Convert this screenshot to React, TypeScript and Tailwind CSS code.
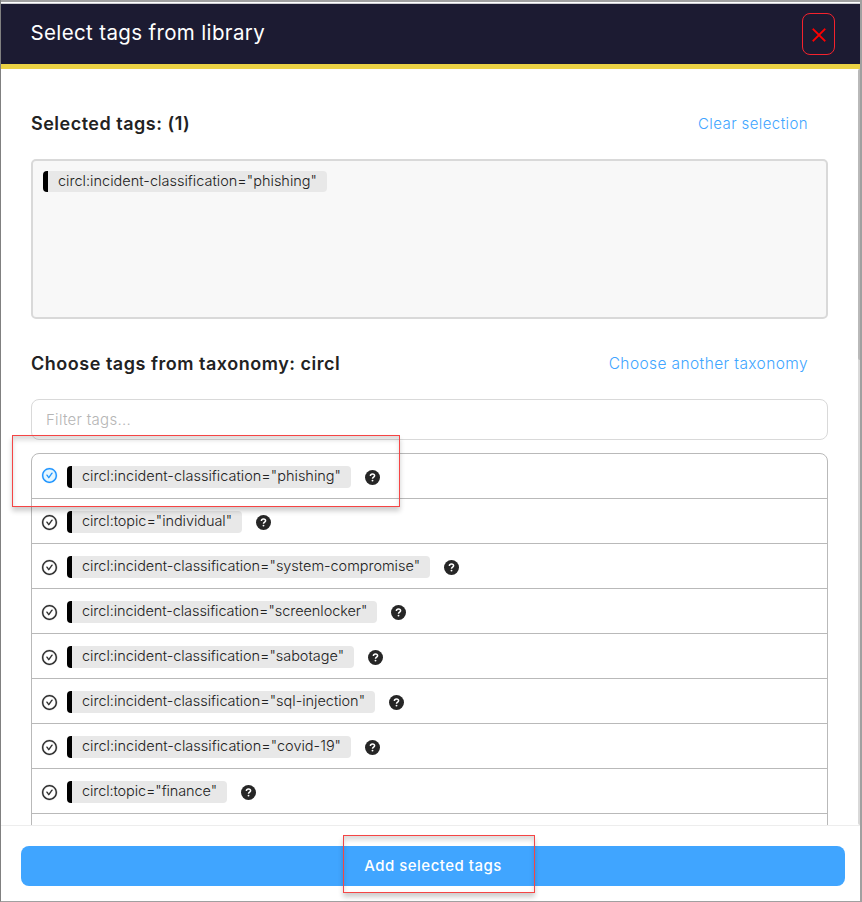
import { AiOutlineCheckCircle, AiOutlineClose } from 'react-icons/ai';

type TagItem = { name: string; tracking: string };

const tags: TagItem[] = [
  { name: 'circl:incident-classification="phishing"', tracking: 'tracking-[0.012px]' },
  { name: 'circl:topic="individual"', tracking: 'tracking-[-0.059px]' },
  { name: 'circl:incident-classification="system-compromise"', tracking: 'tracking-[-0.03px]' },
  { name: 'circl:incident-classification="screenlocker"', tracking: 'tracking-[-0.065px]' },
  { name: 'circl:incident-classification="sabotage"', tracking: 'tracking-[-0.034px]' },
  { name: 'circl:incident-classification="sql-injection"', tracking: 'tracking-[-0.023px]' },
  { name: 'circl:incident-classification="covid-19"', tracking: 'tracking-[0.009px]' },
  { name: 'circl:topic="finance"', tracking: 'tracking-[-0.099px]' },
];

function HelpIcon() {
  return (
    <svg viewBox="0 0 15 15" className="ml-3.5 mt-1 h-[15px] w-[15px] shrink-0">
      <circle cx="7.5" cy="7.5" r="7.5" fill="#262626" />
      <path d="M5.4 5.9C5.4 4.6 6.3 3.9 7.5 3.9s2.1.7 2.1 1.8c0 1.4-2.1 1.4-2.1 3" fill="none" stroke="#fff" strokeWidth="1.5" />
      <circle cx="7.5" cy="10.6" r="0.95" fill="#fff" />
    </svg>
  );
}

function Tag({ tag, height }: { tag: TagItem; height: string }) {
  return (
    <span
      className={`${height} ${tag.tracking} block shrink-0 whitespace-nowrap rounded-[4px] border-l-[5px] border-black bg-[#e8e8e8] px-2.5 text-[14.5px] font-light leading-5 text-[#222]`}
    >
      {tag.name}
    </span>
  );
}

function TagRow({ tag, selected }: { tag: TagItem; selected: boolean }) {
  return (
    <li className="flex h-[45px] items-start border-b border-[#b9b9b9] pl-[9px] pt-3">
      {selected ? (
        <span className="mx-px mt-0.5 flex h-[15px] w-[15px] shrink-0 items-center justify-center rounded-full bg-[#e6f7ff]">
          <AiOutlineCheckCircle className="h-[17px] w-[17px] shrink-0 stroke-[#1890ff] stroke-[14] text-[#1890ff]" />
        </span>
      ) : (
        <AiOutlineCheckCircle className="mt-[3px] h-[17px] w-[17px] shrink-0 stroke-[#262626] stroke-[18] text-[#262626]" />
      )}
      <div className="ml-[9px]">
        <Tag tag={tag} height="h-[22px]" />
      </div>
      <HelpIcon />
    </li>
  );
}

export default function App() {
  return (
    <div className="relative flex h-[902px] w-[862px] flex-col overflow-hidden border-b border-l border-r-2 border-b-[#a0a0a0] border-l-[#808080] border-r-[#a0a0a0] bg-white font-['Inter',sans-serif]">
      <div className="h-0.5 shrink-0 bg-[#a0a0a0]" />
      <div className="h-0.5 shrink-0 border-b border-[#d0d0d4] bg-white" />
      <header className="flex h-[65px] shrink-0 items-start justify-between border-b-[5px] border-[#ebd244] bg-[#1c1b32] pl-[29.5px] pr-[25px]">
        <h1 className="mt-[15px] text-[20.5px] leading-7 tracking-[0.36px] text-white">Select tags from library</h1>
        <button className="mt-[9px] flex h-[42px] w-[33px] items-center justify-center rounded-[8px] border border-[#f5222d]">
          <AiOutlineClose className="mt-0.5 h-5 w-5 shrink-0 stroke-[#ff0000] stroke-[16] text-[#ff0000]" />
        </button>
      </header>

      <div className="flex min-h-0 flex-1">
        <main className="flex min-w-0 flex-1 flex-col overflow-hidden pl-[30px] pr-[30px]">
          <div className="mt-[41px] flex h-7 items-center justify-between pr-5">
            <h2 className="text-[18px] font-semibold leading-7 tracking-[0.5px] text-[#222]">Selected tags: (1)</h2>
            <a className="text-[15px] font-light leading-7 tracking-[0.411px] text-[#40a5ff]">Clear selection</a>
          </div>
          <div className="mt-[21px] flex h-40 shrink-0 items-start rounded-[5px] border-2 border-[#d9d9d9] bg-[#f8f8f8] pl-2.5 pt-2.5">
            <Tag tag={tags[0]} height="h-[21px]" />
          </div>

          <div className="mt-[31px] flex h-7 shrink-0 items-center justify-between pr-5">
            <h2 className="text-[18px] font-semibold leading-7 tracking-[0.52px] text-[#222]">Choose tags from taxonomy: circl</h2>
            <a className="text-[15.5px] font-light leading-7 tracking-[0.4px] text-[#40a5ff]">Choose another taxonomy</a>
          </div>
          <div className="mt-[21px] flex h-[41px] shrink-0 items-center rounded-[8px] border border-[#d9d9d9] pl-3.5 pt-0.5 text-[15px] font-light tracking-[0.282px] text-[#b5b5b5]">
            Filter tags...
          </div>
          <ul className="mt-[13px] h-[420px] shrink-0 rounded-t-[8px] border border-[#b9b9b9]">
            {tags.map((tag, i) => (
              <TagRow key={tag.name} tag={tag} selected={i === 0} />
            ))}
          </ul>
        </main>
        <div className="flex w-0.5 shrink-0 flex-col rounded-l-full bg-[#d9d9d9]">
          <div className="h-[291px] rounded-l-full bg-[#b9b9b9]" />
        </div>
      </div>

      <footer className="flex h-[76px] shrink-0 items-start border-t border-[#ededed] bg-white pl-5 pr-[15px] pt-5">
        <button className="flex h-10 w-full items-center justify-center rounded-[8px] bg-[#40a5ff] text-[15px] font-medium tracking-[0.48px] text-white">
          Add selected tags
        </button>
      </footer>

      <div className="absolute left-[11px] top-[435px] h-[72px] w-[388px] border border-[#f54545] shadow-[0_4px_5px_rgba(0,0,0,0.2),inset_0_4px_5px_rgba(0,0,0,0.14)]" />
      <div className="absolute left-[342px] top-[835px] h-[58px] w-[192px] border border-[#f54545] shadow-[0_4px_5px_rgba(0,0,0,0.2),inset_0_4px_5px_rgba(0,0,0,0.14)]" />
    </div>
  );
}
